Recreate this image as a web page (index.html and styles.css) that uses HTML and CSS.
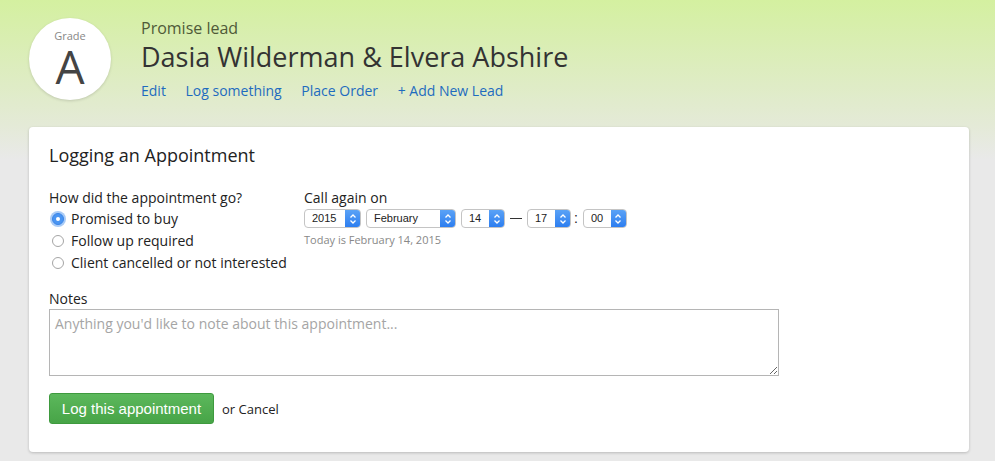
FILE: index.html
```html
<!DOCTYPE html>
<html lang="en">
<head>
    <meta charset="UTF-8">
    <title>Logging an Appointment</title>
    <link rel="stylesheet" href="styles.css">
</head>
<body>
    <div class="header">
        <div class="grade">
            <span class="grade-label">Grade</span>
            <span class="grade-letter">A</span>
        </div>
        <div class="lead-info">
            <div class="lead-status">Promise lead</div>
            <h1>Dasia Wilderman &amp; Elvera Abshire</h1>
            <div class="lead-links">
                <a href="#">Edit</a>
                <a href="#">Log something</a>
                <a href="#">Place Order</a>
                <a href="#">+ Add New Lead</a>
            </div>
        </div>
    </div>

    <div class="card">
        <h2>Logging an Appointment</h2>
        <div class="row">
            <div class="outcome">
                <div class="label">How did the appointment go?</div>
                <label class="radio"><span class="dot checked"></span>Promised to buy</label>
                <label class="radio"><span class="dot"></span>Follow up required</label>
                <label class="radio"><span class="dot"></span>Client cancelled or not interested</label>
            </div>
            <div class="callback">
                <div class="label">Call again on</div>
                <div class="selects">
                    <div class="select w-year"><span class="value">2015</span><span class="arrow"><svg width="8" height="12" viewBox="0 0 8 12"><path d="M1.5 4.5 4 2 6.5 4.5M1.5 7.5 4 10 6.5 7.5" fill="none" stroke="#fff" stroke-width="1.3"/></svg></span></div>
                    <div class="select w-month"><span class="value">February</span><span class="arrow"><svg width="8" height="12" viewBox="0 0 8 12"><path d="M1.5 4.5 4 2 6.5 4.5M1.5 7.5 4 10 6.5 7.5" fill="none" stroke="#fff" stroke-width="1.3"/></svg></span></div>
                    <div class="select w-day"><span class="value">14</span><span class="arrow"><svg width="8" height="12" viewBox="0 0 8 12"><path d="M1.5 4.5 4 2 6.5 4.5M1.5 7.5 4 10 6.5 7.5" fill="none" stroke="#fff" stroke-width="1.3"/></svg></span></div>
                    <span class="sep dash"></span>
                    <div class="select w-day"><span class="value">17</span><span class="arrow"><svg width="8" height="12" viewBox="0 0 8 12"><path d="M1.5 4.5 4 2 6.5 4.5M1.5 7.5 4 10 6.5 7.5" fill="none" stroke="#fff" stroke-width="1.3"/></svg></span></div>
                    <span class="sep colon">:</span>
                    <div class="select w-day"><span class="value">00</span><span class="arrow"><svg width="8" height="12" viewBox="0 0 8 12"><path d="M1.5 4.5 4 2 6.5 4.5M1.5 7.5 4 10 6.5 7.5" fill="none" stroke="#fff" stroke-width="1.3"/></svg></span></div>
                </div>
                <div class="hint">Today is February 14, 2015</div>
            </div>
        </div>

        <div class="label notes-label">Notes</div>
        <div class="notes">
            <textarea placeholder="Anything you'd like to note about this appointment..."></textarea>
        </div>

        <div class="actions">
            <button>Log this appointment</button>
            <span>or <a href="#">Cancel</a></span>
        </div>
    </div>
</body>
</html>
```

FILE: styles.css
```css
body {
    margin: 0;
    font-family: 'Open Sans', sans-serif;
    font-size: 14px;
    color: #222;
    background: linear-gradient(#d4f0a0 0, #e4ead7 125px, #e9e9e9 160px, #e9e9e9);
    height: 461px;
    overflow: hidden;
}
.header {
    display: flex;
    align-items: flex-start;
    padding: 18px 0 0 29px;
    height: 109px;
    box-sizing: border-box;
}
.grade {
    width: 82px;
    height: 82px;
    border-radius: 50%;
    background: #fff;
    box-shadow: 0 1px 3px rgba(0, 0, 0, 0.15);
    display: flex;
    flex-direction: column;
    align-items: center;
}
.grade-label {
    font-size: 11px;
    color: #888;
    margin-top: 11px;
    line-height: 13px;
}
.grade-letter {
    font-size: 46px;
    line-height: 46px;
    margin-top: 1px;
    color: #444;
}
.lead-info {
    margin-left: 30px;
}
.lead-status {
    font-size: 16px;
    color: #4f5a38;
    line-height: 20px;
}
h1 {
    margin: 0;
    font-size: 27px;
    font-weight: normal;
    color: #333;
    line-height: 38px;
}
.lead-links {
    margin-top: 5px;
    line-height: 20px;
}
.lead-links a {
    color: #1e6bbf;
    text-decoration: none;
    margin-right: 16px;
}
.card {
    margin: 18px 26px 0 29px;
    background: #fff;
    border-radius: 4px;
    box-shadow: 0 1px 3px rgba(0, 0, 0, 0.2);
    padding: 16px 20px 28px;
    height: 325px;
    box-sizing: border-box;
}
h2 {
    margin: 0;
    font-size: 18px;
    font-weight: normal;
    color: #222;
    line-height: 24px;
}
.row {
    display: flex;
    margin-top: 21px;
}
.label {
    line-height: 20px;
}
.outcome {
    width: 255px;
}
.radio {
    display: flex;
    align-items: center;
    line-height: 22px;
}
.dot {
    width: 12px;
    height: 12px;
    border: 1px solid #a5a5a5;
    border-radius: 50%;
    box-sizing: border-box;
    margin: 0 7px 0 3px;
    background: #fff;
    display: flex;
    align-items: center;
    justify-content: center;
}
.dot.checked {
    border-color: #3a85e8;
    background: #4a95f2;
    box-shadow: 0 0 0 2px #a9cbf6;
}
.dot.checked::after {
    content: "";
    width: 4px;
    height: 4px;
    border-radius: 50%;
    background: #fff;
}
.selects {
    display: flex;
    align-items: center;
    margin-top: 1px;
    font-family: 'Liberation Sans', sans-serif;
    font-size: 11px;
}
.select {
    display: flex;
    height: 19px;
    border: 1px solid #c4c4c4;
    border-radius: 4px;
    box-sizing: border-box;
    overflow: hidden;
    margin-right: 5px;
    background: #fff;
}
.select .value {
    flex: 1;
    padding-left: 7px;
    line-height: 17px;
}
.select .arrow {
    width: 15px;
    background: linear-gradient(#5aa2f6, #2d7ef0);
    display: flex;
    align-items: center;
    justify-content: center;
}
.w-year { width: 57px; }
.w-month { width: 90px; }
.w-day { width: 44px; }
.sep.dash {
    width: 12px;
    height: 1.5px;
    background: #333;
    margin: 0 5px 0 0;
}
.sep.colon {
    font-size: 14px;
    margin: 0 5px 2px -2px;
}
.hint {
    font-size: 11px;
    color: #888;
    margin-top: 4px;
}
.notes-label {
    margin-top: 15px;
}
.notes {
    width: 730px;
}
textarea {
    display: block;
    width: 100%;
    height: 67px;
    box-sizing: border-box;
    border: 1px solid #b5b5b5;
    padding: 4px 5px;
    font-family: 'Open Sans', sans-serif;
    font-size: 14px;
    resize: vertical;
}
textarea::placeholder {
    color: #a5a5a5;
}
.actions {
    display: flex;
    align-items: center;
    margin-top: 17px;
    font-size: 13px;
}
.actions a {
    color: #222;
    text-decoration: none;
}
button {
    height: 31px;
    width: 165px;
    border: 1px solid #3e9a3e;
    border-radius: 3px;
    background: linear-gradient(#5cb85c, #47a447);
    color: #fff;
    font-family: 'Liberation Sans', sans-serif;
    font-size: 15px;
    margin-right: 8px;
}
```
